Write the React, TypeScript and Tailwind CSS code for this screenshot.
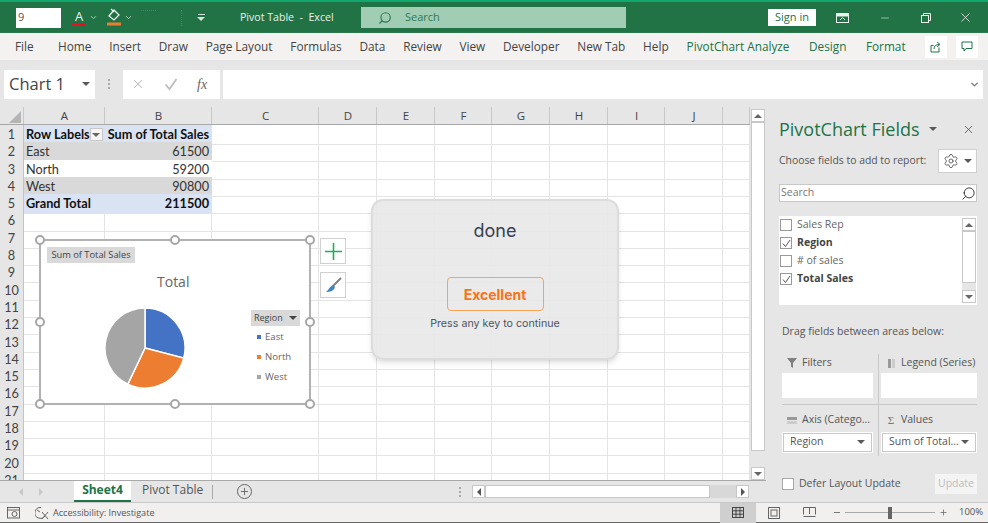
import { ChevronDown, Minus, Plus, Search, Settings, X } from 'lucide-react'

const tabs = ['Home', 'Insert', 'Draw', 'Page Layout', 'Formulas', 'Data', 'Review', 'View', 'Developer', 'New Tab', 'Help']
const chartTabs = ['PivotChart Analyze', 'Design', 'Format']
const columns = ['A', 'B', 'C', 'D', 'E', 'F', 'G', 'H', 'I', 'J', '']
const colTemplate = 'grid grid-cols-[24px_81px_107px_107px_58px_58px_57px_58px_58px_57px_58px_27px]'
const rows = Array.from({ length: 21 }, (_, i) => i + 1)

const pivot: Record<number, { a: string; b: string; fill: string; bold?: boolean }> = {
  1: { a: 'Row Labels', b: 'Sum of Total Sales', fill: 'bg-[#dae3f3] border-b-[#b4c6e7]', bold: true },
  2: { a: 'East', b: '61500', fill: 'bg-[#d9d9d9] border-b-[#d9d9d9]' },
  3: { a: 'North', b: '59200', fill: 'bg-white border-b-white' },
  4: { a: 'West', b: '90800', fill: 'bg-[#d9d9d9] border-b-[#b4c6e7]' },
  5: { a: 'Grand Total', b: '211500', fill: 'bg-[#dae3f3] border-b-[#dae3f3]', bold: true },
}

// pie slices, clockwise from 12 o'clock
const slices = [
  { value: 61500, color: '#4472c4' },
  { value: 59200, color: '#ed7d31' },
  { value: 90800, color: '#a5a5a5' },
]

function slicePaths() {
  const total = slices.reduce((s, x) => s + x.value, 0)
  let angle = 0
  return slices.map((s) => {
    const start = angle
    angle += (s.value / total) * Math.PI * 2
    const x1 = 41 + 40 * Math.sin(start)
    const y1 = 41 - 40 * Math.cos(start)
    const x2 = 41 + 40 * Math.sin(angle)
    const y2 = 41 - 40 * Math.cos(angle)
    const large = angle - start > Math.PI ? 1 : 0
    return { d: `M41 41 L${x1} ${y1} A40 40 0 ${large} 1 ${x2} ${y2} Z`, color: s.color }
  })
}

function Caret({ className = 'border-t-[#595959]' }: { className?: string }) {
  return <span className={`h-0 w-0 border-x-[4px] border-t-[4px] border-x-transparent ${className}`} />
}

function TitleBar() {
  return (
    <div className="flex h-[33px] shrink-0 items-center border-t-2 border-[#10a96d] bg-[#217346] text-white">
      <div className="ml-4 flex h-[20px] w-[45px] items-center bg-white pl-[2px] text-[11px] text-[#555]">9</div>
      <div className="ml-[10px] flex w-[16px] flex-col items-center text-[13px] leading-[13px] text-[#e8f1ec]">
        A
        <span className="h-[3px] w-[14px] bg-[#e81123]" />
      </div>
      <ChevronDown size={9} className="ml-[2px] text-[#d7e6dd]" />
      <svg width="16" height="19" viewBox="0 0 16 19" className="ml-[8px]" fill="none">
        <path d="M8 2 L13 7 L8 12 L3 8 Z" stroke="#e8f1ec" strokeWidth="1.3" />
        <path d="M5 1 L8 4" stroke="#e8f1ec" strokeWidth="1.2" />
        <rect x="1" y="14.5" width="14" height="3" fill="#ed7d31" />
      </svg>
      <ChevronDown size={9} className="ml-[2px] text-[#d7e6dd]" />
      <div className="ml-[8px] h-[16px] w-[15px] border-t border-dotted border-[#3c8a60]" />
      <div className="ml-[12px] h-[16px] w-[14px] border-r border-dotted border-[#3c8a60]" />
      <div className="ml-[15px] flex flex-col items-center gap-[2px]">
        <span className="h-px w-[7px] bg-[#d7e6dd]" />
        <Caret className="border-t-[#d7e6dd]" />
      </div>
      <div className="ml-[35px] w-[93px] whitespace-pre text-[10.6px] text-[#e8f1ec]">Pivot Table  -  Excel</div>
      <div className="ml-[28px] flex h-[21px] w-[265px] items-center bg-[#a0cdb4] pl-[17px] text-[11px] text-[#2f7a54]">
        <Search size={14} className="-scale-x-100" />
        <span className="ml-[13px]">Search</span>
      </div>
      <div className="ml-[142px] flex h-[17px] w-[48px] items-center justify-center bg-white text-[11px] text-[#217346]">
        Sign in
      </div>
      <svg width="13" height="10" viewBox="0 0 13 10" className="ml-[20px]">
        <rect x="0.5" y="0.5" width="12" height="9" fill="none" stroke="#e8f1ec" />
        <rect x="0.5" y="0.5" width="12" height="3" fill="#e8f1ec" />
        <path d="M4 7 L6.5 4.5 L9 7" fill="none" stroke="#e8f1ec" />
      </svg>
      <Minus size={12} strokeWidth={1.2} className="ml-[30px] text-[#e8f1ec]" />
      <svg width="10" height="10" viewBox="0 0 10 10" className="ml-[30px]" fill="none" stroke="#e8f1ec">
        <rect x="0.5" y="2.5" width="7" height="7" />
        <path d="M2.5 2.5 V0.5 H9.5 V7.5 H7.5" />
      </svg>
      <X size={15} strokeWidth={1.3} className="ml-[27px] text-[#e8f1ec]" />
    </div>
  )
}

function RibbonTabs() {
  return (
    <div className="flex h-[27px] shrink-0 items-center whitespace-nowrap bg-[#f3f2f1] pl-[15px] pr-[10px] text-[11.8px] text-[#444] shadow-[0_1px_2px_#d0d0d0]">
      <span className="w-[43px]">File</span>
      <div className="flex gap-[17.8px]">
        {tabs.map((t) => (
          <span key={t}>{t}</span>
        ))}
      </div>
      <div className="ml-[18px] flex gap-[19.5px] text-[#217346]">
        {chartTabs.map((t) => (
          <span key={t}>{t}</span>
        ))}
      </div>
      <div className="ml-auto flex gap-[9px]">
        <div className="flex h-[22px] w-[22px] items-center justify-center bg-white">
          <svg width="12" height="12" viewBox="0 0 12 12" fill="none" stroke="#217346">
            <path d="M9 6.5 V11 H1 V4.5 H3.5 M4 8 C4 5 6 3.5 9 3.5 M7 1 L10 3.5 L7 6" />
          </svg>
        </div>
        <div className="flex h-[22px] w-[22px] items-center justify-center bg-white">
          <svg width="12" height="11" viewBox="0 0 12 11" fill="none" stroke="#217346">
            <path d="M1 1 H11 V7.5 H5 L3 10 V7.5 H1 Z" />
          </svg>
        </div>
      </div>
    </div>
  )
}

function FormulaBar() {
  return (
    <div className="flex h-[47px] shrink-0 items-center bg-[#e6e6e6] pl-1 pt-[1px]">
      <div className="flex h-[29px] w-[91px] items-center justify-between bg-white pl-[5px] pr-[5px] text-[16.5px] text-[#444]">
        Chart 1
        <Caret />
      </div>
      <div className="ml-[13px] flex w-[4px] flex-col gap-[2px]">
        <span className="h-[2px] w-[2px] bg-[#aaa]" />
        <span className="h-[2px] w-[2px] bg-[#aaa]" />
        <span className="h-[2px] w-[2px] bg-[#aaa]" />
      </div>
      <div className="ml-[11px] flex h-[29px] w-[97px] items-center gap-[19px] bg-white pl-[8px] text-[#bdbdbd]">
        <X size={14} strokeWidth={1.8} />
        <svg width="14" height="14" viewBox="0 0 14 14" fill="none" stroke="#bdbdbd" strokeWidth="1.8">
          <path d="M1.5 7.5 L5.5 12 L12.5 2" />
        </svg>
        <span className="font-['Liberation_Serif',serif] text-[14px] italic text-[#666]">fx</span>
      </div>
      <div className="ml-[3px] flex h-[29px] w-[760px] items-center justify-end bg-white pr-[3px]">
        <ChevronDown size={11} strokeWidth={3} className="text-[#777]" />
      </div>
    </div>
  )
}

function SheetGrid() {
  return (
    <div className="relative min-w-0 w-[750px] overflow-hidden bg-white font-['Lato',sans-serif] text-[12.7px] text-[#333]">
      <div className={`${colTemplate} h-[18px] bg-[#e6e6e6] text-[11.5px] font-['Open_Sans',sans-serif] text-[#444] border-b border-[#a8a8a8]`}>
        <div className="flex items-end justify-end border-r border-[#c8c8c8] pb-[1px] pr-[2px]">
          <span className="h-0 w-0 border-b-[12px] border-l-[12px] border-b-[#b5b5b5] border-l-transparent" />
        </div>
        {columns.map((c, i) => (
          <div key={i} className="flex items-center justify-center border-r border-[#c8c8c8] pl-[1px]">
            {c}
          </div>
        ))}
      </div>
      {rows.map((r) => {
        const p = pivot[r]
        return (
          <div key={r} className={`${colTemplate} h-[17.3px]`}>
            <div className="flex items-center justify-center border-r border-b border-[#c4c4c4] bg-[#e6e6e6] text-[#444]">{r}</div>
            {columns.map((_, i) => {
              if (p && i === 0) {
                return (
                  <div key={i} className={`flex items-center justify-between whitespace-nowrap border-b pl-[2px] pr-[2px] ${p.fill} ${p.bold ? 'font-bold text-[#111]' : ''}`}>
                    {p.a}
                    {r === 1 && (
                      <span className="flex h-[13px] w-[14px] items-center justify-center border border-[#c8c8c8] bg-[#f4f4f4]">
                        <Caret className="border-t-[#666]" />
                      </span>
                    )}
                  </div>
                )
              }
              if (p && i === 1) {
                return (
                  <div key={i} className={`flex items-center justify-end whitespace-nowrap border-b pr-[3px] ${p.fill} ${p.bold ? 'font-bold text-[#111]' : ''}`}>
                    {p.b}
                  </div>
                )
              }
              return <div key={i} className="border-r border-b border-[#e4e4e4]" />
            })}
          </div>
        )
      })}
    </div>
  )
}

function VerticalScroll() {
  return (
    <div className="flex w-[16px] shrink-0 flex-col items-center bg-[#e6e6e6] pt-[2px]">
      <div className="flex h-[13px] w-[14px] items-center justify-center border border-[#c8c8c8] bg-white">
        <span className="h-0 w-0 border-x-[4px] border-b-[4px] border-x-transparent border-b-[#666]" />
      </div>
      <div className="h-[329px] w-[14px] border border-[#c8c8c8] bg-white" />
      <div className="h-[16px]" />
      <div className="flex h-[13px] w-[14px] items-center justify-center border border-[#c8c8c8] bg-white">
        <Caret className="border-t-[#666]" />
      </div>
    </div>
  )
}

function SheetTabs() {
  return (
    <div className="flex h-[22px] w-[766px] items-center whitespace-nowrap bg-[#e6e6e6] border-t border-[#a8a8a8] text-[12px] text-[#555]">
      <span className="ml-[19px] h-0 w-0 border-y-[4px] border-r-[4px] border-y-transparent border-r-[#c8c8c8]" />
      <span className="ml-[16px] h-0 w-0 border-y-[4px] border-l-[4px] border-y-transparent border-l-[#c8c8c8]" />
      <div className="ml-[31px] flex h-[21px] w-[57px] items-center justify-center self-start border-b-2 border-[#217346] bg-white pb-[2px] font-bold text-[#217346]">
        Sheet4
      </div>
      <span className="ml-[11px] w-[61px] pb-[4px]">Pivot Table</span>
      <span className="ml-[9px] h-[14px] w-px bg-[#aaa]" />
      <span className="ml-[24px] flex h-[15px] w-[15px] items-center justify-center rounded-full border border-[#666]">
        <Plus size={11} className="text-[#666]" />
      </span>
      <div className="ml-[207px] flex flex-col gap-[2px]">
        <span className="h-[2px] w-[2px] bg-[#aaa]" />
        <span className="h-[2px] w-[2px] bg-[#aaa]" />
        <span className="h-[2px] w-[2px] bg-[#aaa]" />
      </div>
      <div className="ml-[11px] flex h-[13px] w-[277px] items-stretch bg-[#d8d8d8]">
        <div className="flex w-[13px] items-center justify-center border border-[#c8c8c8] bg-white">
          <span className="h-0 w-0 border-y-[4px] border-r-[4px] border-y-transparent border-r-[#555]" />
        </div>
        <div className="w-[225px] border border-[#c8c8c8] bg-white" />
        <div className="flex-1" />
        <div className="flex w-[13px] items-center justify-center border border-[#c8c8c8] bg-white">
          <span className="h-0 w-0 border-y-[4px] border-l-[4px] border-y-transparent border-l-[#555]" />
        </div>
      </div>
    </div>
  )
}

function StatusBar() {
  return (
    <div className="flex h-[21px] shrink-0 items-center whitespace-nowrap border-t border-[#c8c8c8] border-b border-b-[#666] bg-[#f1f0ee] text-[9.5px] text-[#555]">
      <svg width="13" height="13" viewBox="0 0 13 13" className="ml-[7px]" fill="none" stroke="#666">
        <rect x="0.5" y="1.5" width="12" height="10.5" />
        <path d="M0.5 4 H12.5" />
        <circle cx="7.5" cy="8" r="2.5" />
      </svg>
      <svg width="14" height="14" viewBox="0 0 14 14" className="ml-[15px]" fill="none" stroke="#666">
        <path d="M6 1.5 A5.5 5.5 0 1 0 10 10 M2 4 L5 6 M7 6 L13 13 M13 6 L7 13" />
      </svg>
      <span className="ml-[4px] w-[100px] text-[9.1px]">Accessibility: Investigate</span>
      <div className="ml-[567px] flex h-[20px] w-[36px] items-center justify-center bg-[#cfcfcf]">
        <svg width="12" height="11" viewBox="0 0 12 11" fill="none" stroke="#444">
          <rect x="0.5" y="0.5" width="11" height="10" />
          <path d="M4 0.5 V10.5 M8 0.5 V10.5 M0.5 3.8 H11.5 M0.5 7.2 H11.5" />
        </svg>
      </div>
      <svg width="12" height="12" viewBox="0 0 12 12" className="ml-[12px]" fill="none" stroke="#666">
        <rect x="0.5" y="0.5" width="11" height="11" />
        <rect x="3" y="3" width="6" height="6" />
      </svg>
      <svg width="13" height="12" viewBox="0 0 13 12" className="ml-[23px]" fill="none" stroke="#666">
        <path d="M0.5 7.5 V0.5 H12.5 V7.5 M0.5 9.5 H12.5 M6.5 0.5 V7" />
      </svg>
      <span className="ml-[18px] h-px w-[6px] bg-[#777]" />
      <div className="relative ml-[5px] flex h-[12px] w-[90px] items-center justify-center">
        <span className="h-px w-full bg-[#aaa]" />
        <span className="absolute h-[12px] w-[4px] bg-[#666]" />
      </div>
      <Plus size={9} className="ml-[4px] text-[#666]" />
      <span className="ml-[11px]">100%</span>
    </div>
  )
}

function FieldRow({ label, checked }: { label: string; checked?: boolean }) {
  return (
    <div className="flex h-[18px] items-center">
      <span className="flex h-[12px] w-[12px] items-center justify-center border border-[#999] bg-white">
        {checked && (
          <svg width="9" height="9" viewBox="0 0 9 9" fill="none" stroke="#555">
            <path d="M1 4.5 L3.5 7.5 L8 1" />
          </svg>
        )}
      </span>
      <span className={`ml-[5px] text-[10.5px] ${checked ? 'font-bold text-[#444]' : 'text-[#666]'}`}>{label}</span>
    </div>
  )
}

function AreaHeader({ icon, label }: { icon: React.ReactNode; label: string }) {
  return (
    <div className="flex h-[19px] items-center whitespace-nowrap text-[10.5px] text-[#555]">
      <span className="flex w-[20px] justify-center">{icon}</span>
      {label}
    </div>
  )
}

function DropField({ label }: { label: string }) {
  return (
    <div className="bg-white px-[1px] py-[1px]">
      <div className="flex h-[19px] items-center justify-between border border-[#c8c8c8] pl-[6px] pr-[6px] text-[10.5px] text-[#555]">
        {label}
        <Caret />
      </div>
    </div>
  )
}

function SidePanel() {
  return (
    <aside className="flex min-h-0 min-w-0 flex-1 flex-col bg-[#e6e6e6] pl-[13px] pr-[11px]">
      <div className="flex h-[42px] items-center pt-[2px]">
        <span className="whitespace-nowrap text-[18px] text-[#217346]">PivotChart Fields</span>
        <span className="ml-[9px] flex"><Caret /></span>
        <X size={13} strokeWidth={1.6} className="ml-[25px] text-[#555]" />
      </div>
      <div className="flex h-[24px] items-center justify-between text-[10.4px] text-[#555]">
        Choose fields to add to report:
        <div className="flex h-[24px] w-[39px] items-center justify-center gap-[5px] border border-[#d0d0d0] bg-white">
          <Settings size={16} strokeWidth={1.3} className="text-[#555]" />
          <Caret />
        </div>
      </div>
      <div className="mt-[11px] flex h-[18px] items-center justify-between border border-[#c8c8c8] bg-white pl-[1px] text-[10.5px] text-[#777]">
        Search
        <Search size={15} strokeWidth={1.5} className="-scale-x-100 text-[#333]" />
      </div>
      <div className="mt-[14px] flex h-[89px] justify-between bg-white pl-[1px] pr-[1px]">
        <div>
          <FieldRow label="Sales Rep" />
          <FieldRow label="Region" checked />
          <FieldRow label="# of sales" />
          <FieldRow label="Total Sales" checked />
        </div>
        <div className="flex w-[14px] flex-col pt-[2px]">
          <div className="flex h-[13px] items-center justify-center border border-[#c8c8c8]">
            <span className="h-0 w-0 border-x-[4px] border-b-[4px] border-x-transparent border-b-[#666]" />
          </div>
          <div className="h-[52px] border border-[#c8c8c8]" />
          <div className="h-[7px] bg-[#e6e6e6]" />
          <div className="flex h-[13px] items-center justify-center border border-[#c8c8c8]">
            <Caret className="border-t-[#666]" />
          </div>
        </div>
      </div>
      <div className="mt-[19px] pl-[3px] text-[10.5px] text-[#555]">Drag fields between areas below:</div>
      <div className="mt-[14px] grid grid-cols-[97px_98px] pl-[3px]">
        <div className="border-r border-b border-[#c8c8c8] pr-[5px] pb-[6px]">
          <AreaHeader
            label="Filters"
            icon={
              <svg width="10" height="10" viewBox="0 0 10 10"><path d="M0 0 H10 L6 5 V10 L4 8.5 V5 Z" fill="#808080" /></svg>
            }
          />
          <div className="h-[25px] bg-white" />
        </div>
        <div className="border-b border-[#c8c8c8] pl-[2px] pb-[6px]">
          <AreaHeader
            label="Legend (Series)"
            icon={
              <svg width="7" height="9" viewBox="0 0 7 9"><rect width="3" height="9" fill="#999" /><rect x="4" width="3" height="9" fill="#ccc" /></svg>
            }
          />
          <div className="h-[25px] bg-white" />
        </div>
        <div className="border-r border-[#c8c8c8] pr-[5px] pt-[6px]">
          <AreaHeader
            label="Axis (Catego..."
            icon={
              <svg width="10" height="7" viewBox="0 0 10 7"><rect width="10" height="3" fill="#999" /><rect y="4" width="10" height="3" fill="#ccc" /></svg>
            }
          />
          <div className="mt-[2px] pb-[3px]">
            <DropField label="Region" />
          </div>
        </div>
        <div className="pl-[2px] pt-[6px]">
          <AreaHeader label="Values" icon={<span className="font-['Liberation_Serif',serif] text-[11px] text-[#777]">Σ</span>} />
          <div className="mt-[2px] pb-[3px]">
            <DropField label="Sum of Total..." />
          </div>
        </div>
      </div>
      <div className="mt-[18px] flex items-center pl-[3px] text-[10.5px] text-[#555]">
        <span className="h-[12px] w-[12px] border border-[#aaa] bg-white" />
        <span className="ml-[5px]">Defer Layout Update</span>
        <div className="ml-auto flex h-[20px] w-[42px] items-center justify-center bg-[#f4f4f4] text-[#bbb]">Update</div>
      </div>
    </aside>
  )
}

function Handle({ className }: { className: string }) {
  return <span className={`absolute h-[10px] w-[10px] rounded-full border-2 border-[#a6a6a6] bg-white ${className}`} />
}

function ChartOverlay() {
  return (
    <>
      <div className="absolute left-[39px] top-[132px] h-[166px] w-[272px] border-2 border-[#b2b2b2] bg-white">
        <Handle className="-left-[6px] -top-[6px]" />
        <Handle className="left-[129px] -top-[6px]" />
        <Handle className="-right-[6px] -top-[6px]" />
        <Handle className="-left-[6px] top-[76px]" />
        <Handle className="-right-[6px] top-[76px]" />
        <Handle className="-left-[6px] -bottom-[6px]" />
        <Handle className="left-[129px] -bottom-[6px]" />
        <Handle className="-right-[6px] -bottom-[6px]" />

        <div className="absolute left-[6px] top-[6px] flex h-[16px] w-[88px] items-center justify-center bg-[#d9d9d9] font-['Open_Sans',sans-serif] text-[9.3px] text-[#444]">
          Sum of Total Sales
        </div>
        <div className="absolute left-[116px] top-[30px] font-['Open_Sans',sans-serif] text-[14px] text-[#666]">Total</div>
        <svg width="82" height="82" viewBox="0 0 82 82" className="absolute left-[63px] top-[66px]">
          {slicePaths().map((s) => (
            <path key={s.color} d={s.d} fill={s.color} stroke="#fff" strokeWidth="1.5" />
          ))}
        </svg>
        <div className="absolute left-[210px] top-[69px] w-[49px] font-['Open_Sans',sans-serif] text-[9.6px] text-[#666]">
          <div className="flex h-[16px] items-center justify-between bg-[#d9d9d9] pl-[3px] pr-[3px] text-[9px] text-[#444]">
            Region
            <Caret className="border-t-[#444]" />
          </div>
          <div className="mt-[3px] flex flex-col gap-[4px]">
            {[
              ['East', 'bg-[#4472c4]'],
              ['North', 'bg-[#ed7d31]'],
              ['West', 'bg-[#a5a5a5]'],
            ].map(([name, color]) => (
              <div key={name} className="flex h-[16px] items-center pl-[6px]">
                <span className={`h-[4px] w-[4px] ${color}`} />
                <span className="ml-[4px]">{name}</span>
              </div>
            ))}
          </div>
        </div>
      </div>
      <div className="absolute left-[320px] top-[131px] flex h-[26px] w-[26px] items-center justify-center border border-[#d0d0d0] bg-white">
        <svg width="17" height="17" viewBox="0 0 17 17" stroke="#1fae5c" strokeWidth="1.6">
          <path d="M8.5 0 V17 M0 8.5 H17" />
        </svg>
      </div>
      <div className="absolute left-[320px] top-[165px] flex h-[26px] w-[26px] items-center justify-center border border-[#d0d0d0] bg-white">
        <svg width="17" height="17" viewBox="0 0 17 17" fill="none">
          <path d="M16 1 L8 9" stroke="#7a7a7a" strokeWidth="1.8" />
          <path d="M8 8 L10 10 C9 14 5 15 1 15 C4 13 4 10 8 8 Z" fill="#3e84c6" />
        </svg>
      </div>
    </>
  )
}

function DoneModal() {
  return (
    <div className="absolute left-[371px] top-[92px] flex h-[161px] w-[248px] flex-col items-center rounded-xl border-2 border-[#dcdcdc] bg-[#e8e8e8]/90 font-['Inter',sans-serif] shadow-md">
      <div className="mt-[18px] text-[18px] leading-[24px] text-[#374151]">done</div>
      <div className="mt-[34px] flex h-[34px] w-[97px] items-center justify-center rounded border border-[#f6a35c] text-[14px] font-bold text-[#f97316]">
        Excellent
      </div>
      <div className="mt-[6px] text-[10.7px] leading-[14px] text-[#4b5563]">Press any key to continue</div>
    </div>
  )
}

export default function App() {
  return (
    <div className="flex h-[523px] w-[988px] flex-col overflow-hidden bg-[#e6e6e6] font-['Open_Sans',sans-serif]">
      <TitleBar />
      <RibbonTabs />
      <FormulaBar />
      <div className="relative flex min-h-0 flex-1">
        <div className="flex w-[766px] shrink-0 flex-col">
          <div className="flex h-[373px] min-h-0">
            <SheetGrid />
            <VerticalScroll />
          </div>
          <SheetTabs />
        </div>
        <SidePanel />
        <ChartOverlay />
        <DoneModal />
      </div>
      <StatusBar />
    </div>
  )
}
